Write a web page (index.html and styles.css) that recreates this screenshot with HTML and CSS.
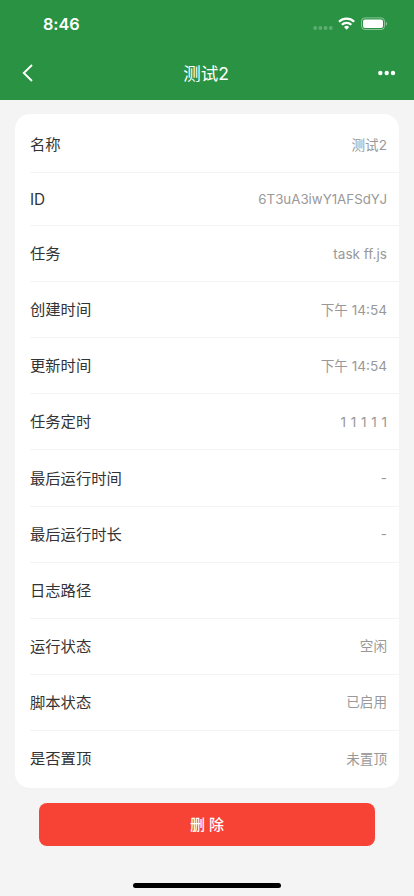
FILE: index.html
```html
<!DOCTYPE html>
<html lang="zh-CN">
<head>
<meta charset="utf-8">
<meta name="viewport" content="width=device-width, initial-scale=1">
<title>测试2</title>
<link rel="stylesheet" href="styles.css">
</head>
<body>
<header class="top">
  <div class="status">
    <span class="clock">8:46</span>
    <svg class="indicators" width="76" height="16" viewBox="0 0 76 16" fill="none">
      <g fill="#fff" fill-opacity=".25"><circle cx="3.200" cy="12" r="1.900"/><circle cx="8.400" cy="12" r="1.900"/><circle cx="13.600" cy="12" r="1.900"/><circle cx="18.800" cy="12" r="1.900"/></g>
      <g stroke="#fff" stroke-width="2.2"><path d="M27 5.700a11 11 0 0 1 15.200 0"/><path d="M29.800 8.700a7 7 0 0 1 9.600 0"/></g>
      <path d="M32 10.900a4 4 0 0 1 5.200 0L34.600 13.700z" fill="#fff"/>
      <rect x="49.500" y="1.900" width="23" height="11.600" rx="3.400" stroke="#fff" stroke-opacity=".45"/>
      <rect x="51" y="3.400" width="20" height="8.600" rx="2" fill="#fff"/>
      <path d="M73.800 5.800v4c1.600-.7 1.600-3.300 0-4z" fill="#fff" fill-opacity=".5"/>
    </svg>
  </div>
  <nav class="nav">
    <svg width="12" height="18" viewBox="0 0 12 18" fill="none" stroke="#fff" stroke-width="1.9"><path d="M10 1 1.800 9l8.200 8"/></svg>
    <h1 class="title">测试2</h1>
    <svg width="18" height="6" viewBox="0 0 18 6" fill="#fff"><circle cx="2.300" cy="3" r="2.200"/><circle cx="8.700" cy="3" r="2.200"/><circle cx="15" cy="3" r="2.200"/></svg>
  </nav>
</header>
<main class="content">
  <dl class="card">
    <div class="row"><dt>名称</dt><dd>测试2</dd></div>
    <div class="row latin"><dt>ID</dt><dd class="id">6T3uA3iwY1AFSdYJ</dd></div>
    <div class="row"><dt>任务</dt><dd class="task">task ff.js</dd></div>
    <div class="row"><dt>创建时间</dt><dd>下午 14:54</dd></div>
    <div class="row"><dt>更新时间</dt><dd>下午 14:54</dd></div>
    <div class="row"><dt>任务定时</dt><dd class="cron">1 1 1 1 1</dd></div>
    <div class="row"><dt>最后运行时间</dt><dd class="task">-</dd></div>
    <div class="row"><dt>最后运行时长</dt><dd class="task">-</dd></div>
    <div class="row"><dt>日志路径</dt><dd></dd></div>
    <div class="row"><dt>运行状态</dt><dd>空闲</dd></div>
    <div class="row"><dt>脚本状态</dt><dd>已启用</dd></div>
    <div class="row"><dt>是否置顶</dt><dd>未置顶</dd></div>
  </dl>
  <button class="delete" type="button">删 除</button>
</main>
<div class="home"></div>
</body>
</html>
```
FILE: styles.css
```css
* { box-sizing: border-box; margin: 0; padding: 0; }
body {
  height: 896px;
  display: flex;
  flex-direction: column;
  background: #f4f4f4;
  font-family: Inter, "Noto Sans CJK SC", sans-serif;
  overflow: hidden;
}
.top { height: 100px; background: #299343; color: #fff; }
.status {
  height: 48px;
  padding: 0 26px 0 43px;
  display: flex;
  align-items: center;
  justify-content: space-between;
}
.clock { font-size: 16.3px; font-weight: 600; letter-spacing: -0.1px; }
.nav {
  height: 50px;
  padding: 0 18px 0 22px;
  display: flex;
  align-items: center;
  justify-content: space-between;
}
.title { font-size: 17.5px; font-weight: 400; padding-bottom: 2px; }
.content { flex: 1; padding: 14px 15px 0; }
.card {
  height: 674px;
  padding: 3px 0 0 15px;
  border-radius: 15px;
  background: #fff;
}
.row {
  height: 56.1px;
  padding: 0 12px 2px 0;
  display: flex;
  align-items: center;
  justify-content: space-between;
  border-bottom: 1px solid #f4f4f4;
}
.row:last-child { border: 0; }
.row.latin { height: 53px; padding-bottom: 0; }
dt { font-size: 15.3px; color: #333; padding-bottom: 1px; }
.latin dt { padding: 0; }
dd { font-size: 13.6px; color: #999; }
.id { font-size: 13.3px; }
.task { padding-top: 2px; }
.cron { padding-top: 2px; letter-spacing: .45px; margin-right: -.4px; }
.delete {
  display: block;
  width: 336px;
  height: 43px;
  margin: 15px auto 0;
  padding-bottom: 2px;
  border: 0;
  border-radius: 8px;
  background: #f64336;
  color: #fff;
  font: 500 15px Inter, "Noto Sans CJK SC", sans-serif;
}
.home {
  width: 148px;
  height: 5px;
  margin: 0 auto 8px;
  border-radius: 3px;
  background: #000;
}
```
